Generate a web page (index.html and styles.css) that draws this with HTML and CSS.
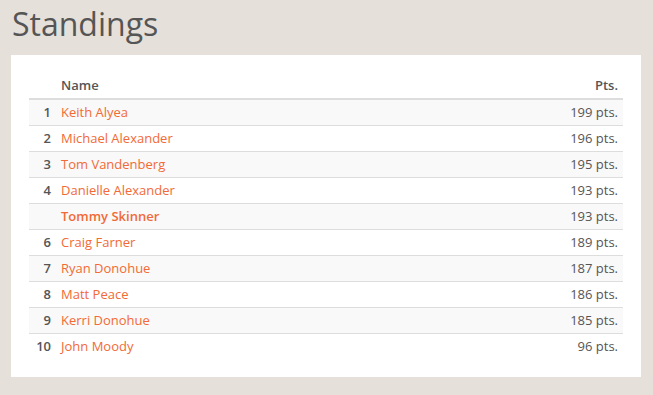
FILE: index.html
```html
<!DOCTYPE html>
<html>
<head>
<meta charset="utf-8">
<link rel="stylesheet" href="styles.css">
</head>
<body>
<h1 class="title">Standings</h1>
<div class="card">
  <table class="standings">
    <thead>
      <tr><th class="rank"></th><th class="name">Name</th><th class="pts">Pts.</th></tr>
    </thead>
    <tbody>
      <tr><td class="rank">1</td><td class="name"><a>Keith Alyea</a></td><td class="pts">199 pts.</td></tr>
      <tr><td class="rank">2</td><td class="name"><a>Michael Alexander</a></td><td class="pts">196 pts.</td></tr>
      <tr><td class="rank">3</td><td class="name"><a>Tom Vandenberg</a></td><td class="pts">195 pts.</td></tr>
      <tr><td class="rank">4</td><td class="name"><a>Danielle Alexander</a></td><td class="pts">193 pts.</td></tr>
      <tr class="me"><td class="rank"></td><td class="name"><a>Tommy Skinner</a></td><td class="pts">193 pts.</td></tr>
      <tr><td class="rank">6</td><td class="name"><a>Craig Farner</a></td><td class="pts">189 pts.</td></tr>
      <tr><td class="rank">7</td><td class="name"><a>Ryan Donohue</a></td><td class="pts">187 pts.</td></tr>
      <tr><td class="rank">8</td><td class="name"><a>Matt Peace</a></td><td class="pts">186 pts.</td></tr>
      <tr><td class="rank">9</td><td class="name"><a>Kerri Donohue</a></td><td class="pts">185 pts.</td></tr>
      <tr><td class="rank">10</td><td class="name"><a>John Moody</a></td><td class="pts">96 pts.</td></tr>
    </tbody>
  </table>
</div>
</body>
</html>
```
FILE: styles.css
```css
html, body {
  margin: 0;
  padding: 0;
}
body {
  background: #e5e0da;
  font-family: "Open Sans", "Noto Sans", sans-serif;
  color: #555;
  padding: 0 12px 0 11px;
}
.title {
  margin: 0;
  padding: 2px 0 0 1px;
  font-size: 32px;
  font-weight: 400;
  line-height: 44px;
  height: 53px;
  color: #555;
}
.card {
  background: #fff;
  padding: 18px 18px 18px 18px;
}
.standings {
  width: 100%;
  border-collapse: collapse;
  font-size: 13px;
}
.standings th {
  font-weight: 600;
  color: #555;
  height: 25px;
  padding: 0 5px 0 5px;
  vertical-align: middle;
  border-bottom: 2px solid #ddd;
  line-height: 17px;
}
.standings td {
  height: 25px;
  padding: 0 5px;
  border-top: 1px solid #ddd;
  line-height: 17px;
  vertical-align: middle;
}
.standings tbody tr:first-child td { border-top: 0; }
.standings tbody tr:nth-child(odd) { background: #f9f9f9; }
.rank {
  width: 17px;
  text-align: right;
  font-weight: 600;
  color: #555;
}
.name { text-align: left; }
.pts { text-align: right; color: #555; }
.name a { color: #f26a35; }
.me .name a { font-weight: 600; }
```
